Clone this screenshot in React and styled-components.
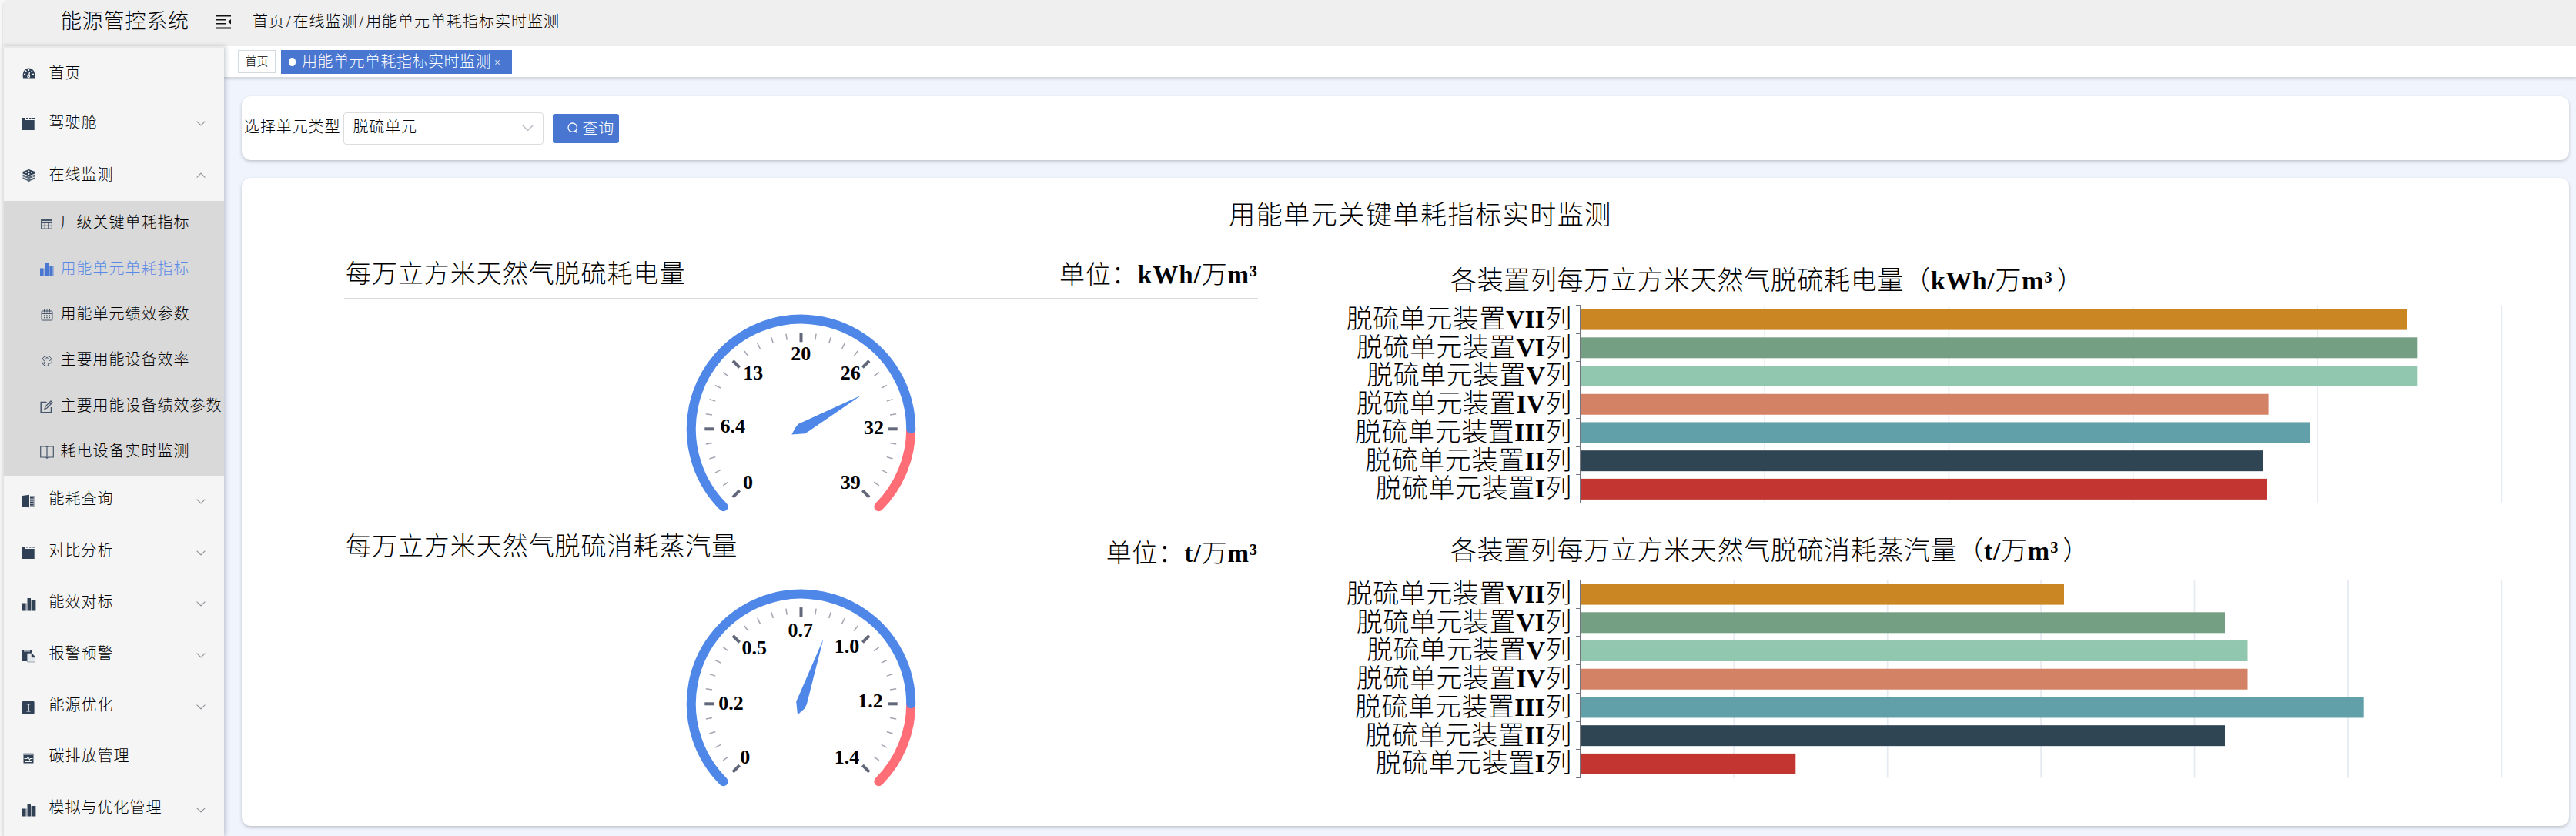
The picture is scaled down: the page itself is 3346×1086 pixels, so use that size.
import React from "react";
import styled, { createGlobalStyle } from "styled-components";

const serif = `"Liberation Serif", "Noto Sans CJK SC", serif`;
const navy = "#304156";
const blue = "#4876d0";

const GlobalStyle = createGlobalStyle`
  * { box-sizing: border-box; }
  body { margin: 0; background: #f7f7f7; }
`;

const Page = styled.div`
  width: 3346px;
  height: 1086px;
  padding-left: 3px;
  display: flex;
  flex-direction: column;
  overflow: hidden;
  font-family: ${serif};
  font-weight: 300;
  color: #000;
  white-space: nowrap;
  line-height: 1;
`;

const Header = styled.header`
  height: 60px;
  flex: none;
  display: flex;
  align-items: center;
  padding: 0 0 4px 75px;
  background: #efefef;
  border-left: 1px solid #e6e6e6;
  border-top-left-radius: 8px;
`;

const Brand = styled.div`
  width: 202px;
  font-size: 27px;
  letter-spacing: 0.8px;
`;

const Crumbs = styled.div`
  margin-left: 28px;
  padding-bottom: 1px;
  font-size: 20px;
  letter-spacing: 1px;
`;

const Slash = styled.span`
  margin: 0 2px;
`;

const Body = styled.div`
  flex: 1;
  display: flex;
  min-height: 0;
`;

const Sidebar = styled.nav`
  position: relative;
  width: 288px;
  flex: none;
  background: #f5f5f5;
  border-left: 2px solid #e4e4e4;
  border-top: 2px solid #e9e9e9;
  box-shadow: 2px 0 6px rgba(0, 21, 41, 0.22);
`;

const MenuRow = styled.div`
  height: ${(p) => p.$h || 66.8}px;
  display: flex;
  align-items: center;
  padding: 0 24px 0 24px;
`;

const SubMenu = styled.div`
  height: 357px;
  background: #d9d9d9;
`;

const SubRow = styled.div`
  height: 59.35px;
  display: flex;
  align-items: center;
  padding-left: 47px;
  color: ${(p) => (p.$active ? "#5b8ae6" : "#000")};
`;

const IconBox = styled.span`
  width: ${(p) => p.$w}px;
  height: 18px;
  flex: none;
  display: flex;
  color: ${(p) => p.$color || navy};
`;

const MenuText = styled.span`
  flex: 1;
  font-size: 20px;
  letter-spacing: 1px;
  padding-bottom: ${(p) => p.$lift || 0}px;
`;

const Main = styled.main`
  flex: 1;
  min-width: 0;
  display: flex;
  flex-direction: column;
  background: #f0f4fd;
`;

const TagBar = styled.div`
  height: 41px;
  flex: none;
  display: flex;
  align-items: center;
  gap: 7px;
  padding: 0 0 0 18px;
  background: #fff;
  border-bottom: 1px solid #d4d9e1;
  box-shadow: 0 2px 3px rgba(0, 0, 0, 0.12);
`;

const Tag = styled.div`
  width: 49px;
  height: 30px;
  display: flex;
  align-items: center;
  justify-content: center;
  border: 1px solid #d3dae0;
  font-size: 15px;
`;

const ActiveTag = styled.div`
  width: 300px;
  height: 31px;
  display: flex;
  align-items: center;
  padding: 0 0 0 10px;
  background: ${blue};
  color: #fff;
  font-size: 20px;
  letter-spacing: 0.5px;
`;

const Dot = styled.span`
  width: 9px;
  height: 11px;
  margin-right: 8px;
  border-radius: 5px;
  background: #fff;
`;

const Close = styled.span`
  margin: 3px 0 0 4px;
  font-size: 14px;
`;

const Card = styled.section`
  margin: ${(p) => p.$m};
  height: ${(p) => p.$h}px;
  flex: none;
  border-radius: 12px;
  background: #fff;
  box-shadow: 0 2px 4px rgba(0, 0, 0, 0.2);
`;

const FilterBar = styled.div`
  height: 100%;
  display: flex;
  align-items: center;
  padding-left: 3px;
  font-size: 20px;
  letter-spacing: 0.9px;
`;

const FieldText = styled.span`
  padding-bottom: 3px;
`;

const Select = styled.div`
  width: 260px;
  height: 42px;
  margin: 0 12px 0 4px;
  padding: 0 12px 0 11px;
  display: flex;
  align-items: center;
  justify-content: space-between;
  border: 1px solid #dcdcdc;
  border-radius: 4px;
`;

const Query = styled.div`
  width: 86px;
  height: 38px;
  display: flex;
  align-items: center;
  padding-left: 19px;
  gap: 5px;
  border-radius: 3px;
  background: ${blue};
  color: #fff;
`;

const PanelTitle = styled.h1`
  margin: 0;
  height: 96px;
  padding: 2px 0 0 39px;
  display: flex;
  align-items: center;
  justify-content: center;
  font-size: 34px;
  font-weight: 300;
  letter-spacing: 1.55px;
`;

const Board = styled.div`
  display: grid;
  grid-template-columns: 1187px 1530px;
  grid-template-rows: 357px 357px;
  column-gap: 106px;
  padding-left: 133px;
`;

const Cell = styled.div`
  display: flex;
  flex-direction: column;
  align-items: center;
`;

const CellHead = styled.div`
  width: 100%;
  height: 61px;
  flex: none;
  display: flex;
  justify-content: space-between;
  align-items: flex-start;
  padding-left: 2px;
  border-bottom: 1px solid #d9d9dc;
  font-size: 33px;
`;

const HeadText = styled.span`
  padding-top: ${(p) => p.$top}px;
  letter-spacing: 0.95px;
`;

const ChartTitle = styled.div`
  width: 100%;
  height: 61px;
  flex: none;
  padding: ${(p) => p.$top}px 0 0 144px;
  font-size: 34px;
  letter-spacing: 0.65px;
`;

const Bold = styled.b`
  font-weight: 700;
  letter-spacing: ${(p) => p.$ls || 0.6}px;
`;

const Paren = styled.span`
  margin-left: 5px;
`;

const ChartSvg = styled.svg`
  display: block;
  flex: none;
  font-family: ${serif};
`;

/* ---------- icons ---------- */

const Svg = ({ children, w = 17, h = 18 }) => (
  <svg width={w} height={h} viewBox={`0 0 ${w} ${h}`} fill="currentColor">{children}</svg>
);

const icons = {
  gauge: (
    <Svg>
      <path d="M1 15.5C-.5 8 3 2.5 8.5 2.5S17.500 8 16 15.500Z" />
      <g stroke="#f5f5f5" strokeWidth="1.3" fill="none">
        <path d="M8.500 3.500v2.500M4 5.500l1.300 1.500M13 5.500l-1.300 1.500M2 10.500h2.200M15 10.500h-2.200M9.500 7.500l-1 5" />
        <circle cx="8.200" cy="13.300" r="1.300" />
      </g>
    </Svg>
  ),
  board: (
    <Svg>
      <path d="M0 1h4v3h13v13H0z" />
      <path d="M5 1h2.500v1.500H5zM9 1h2.500v1.500H9zM13 1h4v1.500h-4z" />
      <path d="M15.500 4H17v13h-1.500z" fill="#a4adb8" />
    </Svg>
  ),
  layers: (
    <Svg>
      <path d="M8.500 1l8 3v2.600l-8 3-8-3V4z" />
      <path d="M.5 7.600l8 3 8-3v2.600l-8 3-8-3zM.5 11.200l8 3 8-3v2.200l-5.500 2.200-2.500 2-2.500-2L.5 13.400z" opacity=".8" />
      <g fill="#f5f5f5"><circle cx="5" cy="5" r="1" /><circle cx="12" cy="5" r="1" /><circle cx="8.500" cy="3.300" r=".9" /><circle cx="8.500" cy="7" r="1" /><circle cx="3.500" cy="10" r=".8" /><circle cx="13.500" cy="10" r=".8" /></g>
    </Svg>
  ),
  table: (
    <Svg>
      <g fill="none" stroke="currentColor" strokeWidth="1.100">
        <rect x="1.600" y="3.600" width="13.800" height="11.500" />
        <path d="M1.600 7.500h13.800M1.600 11.300h13.800M6.200 7.500v7.500M10.800 7.500v7.500" />
        <path d="M1.600 4.200h13.800" strokeWidth="1.800" />
      </g>
    </Svg>
  ),
  bars: (
    <Svg w={18}>
      <path d="M0 7.500h4.500V17.500H0zM6.500 1h4.500v16.500H6.500zM12.500 4h4v13.500h-4z" />
      <path d="M4.500 7.500h1.500v10H4.500zM11 4h1.500v13.500H11zM16.500 4H18v13.500h-1.500z" opacity=".4" />
    </Svg>
  ),
  calendar: (
    <Svg>
      <g fill="none" stroke="currentColor" strokeWidth="1">
        <rect x="2" y="4" width="14" height="12" rx="1" />
        <path d="M2 7.500h14M5.500 2v3.500M12.500 2v3.500M9 2v3.500" />
        <path d="M5 10h1.500M8.200 10h1.500M11.500 10H13M5 12.500h1.500M8.200 12.500h1.500M11.500 12.500H13" strokeWidth="1.600" />
      </g>
    </Svg>
  ),
  palette: (
    <Svg>
      <g fill="none" stroke="currentColor" strokeWidth="1">
        <path d="M9 2.500A6.500 6.500 0 1 0 10 15.400c1.200-.5 0-2 .6-2.900s3.500 0 4.300-1.300C16.500 7 13.500 2.500 9 2.500z" />
        <circle cx="9" cy="5.500" r="1.100" /><circle cx="12.500" cy="7.500" r="1" /><circle cx="5.500" cy="7.500" r="1.100" /><circle cx="5.700" cy="11.500" r="1.100" />
      </g>
    </Svg>
  ),
  edit: (
    <Svg>
      <g fill="none" stroke="currentColor">
        <path d="M8.500 3.500H1.200V16.800H14.500V10" strokeWidth="1.500" />
        <path d="M6 12.500l1-3.500 7-7 2 2-7 7zM12 4l2 2" strokeWidth="1.300" />
      </g>
    </Svg>
  ),
  book: (
    <Svg w={18}>
      <path d="M.7 2H7.500L9 3l1.500-1h6.800v14H10.500L9 17.200 7.500 16H.7zM9 3v14" fill="none" stroke="currentColor" strokeWidth="1.200" />
    </Svg>
  ),
  notebook: (
    <Svg>
      <path d="M0 2L9 .8v16.400L0 16z" />
      <path d="M10 2h5.500v14H10z" opacity=".45" />
      <path d="M10 4h4.500v1.500H10zM10 7h4.500v1.500H10zM10 10h4.500v1.500H10zM10 13h4.500v1.500H10z" />
      <path d="M15.500 2H17v14h-1.500z" opacity=".35" />
    </Svg>
  ),
  copy: (
    <Svg>
      <path d="M0 1h12v3l1 2v10H0z" />
      <path d="M2 2.300h8v1.200H2z" fill="#cfd4da" />
      <path d="M6.500 6H12v5h5v6H6.500z" fill="#e4e7eb" stroke="#9aa5b1" strokeWidth="1" />
      <path d="M12.500 5.500V10.500H17z" />
    </Svg>
  ),
  info: (
    <Svg>
      <rect y="1" width="15.500" height="16.500" rx="1" />
      <path d="M15.500 2H17v14h-1.500z" opacity=".35" />
      <path d="M5.500 4h5v1.300H8.800v8H10.500v1.300h-5V13.300H7.200v-8H5.500z" fill="#f5f5f5" />
    </Svg>
  ),
  monitor: (
    <Svg>
      <path d="M1.500 3h13v12.500h-13z" />
      <path d="M1.500 2.500h13V5h-13z" fill="#8d97a3" />
      <path d="M2.500 9.500H6L7.500 7.500 9.500 11l1-1.500h3M3 13.500h10" fill="none" stroke="#f5f5f5" strokeWidth="1.100" />
    </Svg>
  ),
};

const Chevron = ({ up, w = 12, color = "#8f959c" }) => (
  <svg width={w} height={w * 0.6} viewBox="0 0 20 12" fill="none" stroke={color} strokeWidth="2">
    <path d={up ? "M1 11l9-9 9 9" : "M1 1l9 9 9-9"} />
  </svg>
);

const FoldIcon = () => (
  <svg width="19" height="19" viewBox="0 0 19 19" fill="#111">
    <path d="M0 .5h19v2H0zM0 6h12.500v1.500H0zM0 11h12.500v1.500H0zM0 16.500h19v2H0zM19 6v6.500l-4-3.200z" />
  </svg>
);

const SearchIcon = () => (
  <svg width="14" height="15" viewBox="0 0 14 15" fill="none" stroke="#fff" strokeWidth="1.300">
    <circle cx="6.700" cy="6.700" r="5.700" />
    <path d="M10.500 10.800l2 3.200" />
  </svg>
);

/* ---------- data ---------- */

const topMenu = [
  { icon: "gauge", text: "首页", h: 66 },
  { icon: "board", text: "驾驶舱", arrow: "down", h: 66, lift: 5 },
  { icon: "layers", text: "在线监测", arrow: "up", h: 67, lift: 2 },
];

const subMenu = [
  ["table", "厂级关键单耗指标"],
  ["bars", "用能单元单耗指标"],
  ["calendar", "用能单元绩效参数"],
  ["palette", "主要用能设备效率"],
  ["edit", "主要用能设备绩效参数"],
  ["book", "耗电设备实时监测"],
];

const bottomMenu = [
  { icon: "notebook", text: "能耗查询", arrow: "down" },
  { icon: "board", text: "对比分析", arrow: "down" },
  { icon: "bars", text: "能效对标", arrow: "down" },
  { icon: "copy", text: "报警预警", arrow: "down" },
  { icon: "info", text: "能源优化", arrow: "down" },
  { icon: "monitor", text: "碳排放管理" },
  { icon: "bars", text: "模拟与优化管理", arrow: "down" },
];

const rowColors = ["#c98622", "#749f83", "#91c7ae", "#d48265", "#61a0a8", "#2f4554", "#c23531"];
const numerals = ["VII", "VI", "V", "IV", "III", "II", "I"];

const powerBars = [1074, 1087.3, 1087.3, 893.6, 947.3, 887, 891.2];
const steamBars = [628, 837, 866.5, 866.5, 1016.7, 837, 279.3];

const powerGauge = {
  labels: [["0", 111.5, 237.7], ["6.4", 91.7, 165.5], ["13", 118.3, 96], ["20", 180.3, 71.3], ["26", 244.7, 96], ["32", 275, 167], ["39", 244.7, 238.5]],
  needle: "258.700,125.500 177,162.700 173.500,167 168.300,176.500 185.500,175.300 190,172.500",
};
const steamGauge = {
  labels: [["0", 107.7, 238], ["0.2", 89.5, 167.700], ["0.5", 119.7, 96.500], ["0.7", 179.7, 73.200], ["1.0", 240, 94.500], ["1.2", 270.500, 165.500], ["1.4", 240, 238.500]],
  needle: "209.300,85.500 174.200,166.500 176,183.500 185,175.500 187.800,170",
};

const MenuItem = ({ item, lift }) => (
  <MenuRow $h={item.h}>
    <IconBox $w={34.5}>{icons[item.icon]}</IconBox>
    <MenuText $lift={item.lift ?? lift}>{item.text}</MenuText>
    {item.arrow && <Chevron up={item.arrow === "up"} />}
  </MenuRow>
);

const Gauge = ({ labels, needle }) => {
  const cx = 180.5, cy = 169.3, r = 142.7;
  const pt = (deg, rad) => {
    const a = (deg * Math.PI) / 180;
    return [cx + rad * Math.cos(a), cy - rad * Math.sin(a)];
  };
  const [sx, sy] = pt(225, r);
  const [mx, my] = pt(0, r);
  const [ex, ey] = pt(-45, r);
  const ticks = Array.from({ length: 31 }, (_, i) => {
    const major = i % 5 === 0;
    const a = 225 - i * 9;
    const [x1, y1] = pt(a, 125.2);
    const [x2, y2] = pt(a, major ? 113 : 117);
    return (
      <line key={i} x1={x1} y1={y1} x2={x2} y2={y2}
        stroke={major ? "#63677a" : "#a3a5b0"} strokeWidth={major ? 4 : 1.5} />
    );
  });
  return (
    <ChartSvg width="361" height="296" viewBox="0 0 361 296">
      <g fill="none" strokeWidth="12" strokeLinecap="round">
        <path d={`M${mx} ${my}A${r} ${r} 0 0 1 ${ex} ${ey}`} stroke="#ff6e76" />
        <path d={`M${sx} ${sy}A${r} ${r} 0 1 1 ${mx} ${my}`} stroke="#4f87e9" />
      </g>
      {ticks}
      {labels.map(([t, x, y]) => (
        <text key={t} x={x} y={y + 8.8} fontSize="26" fontWeight="700" textAnchor="middle">{t}</text>
      ))}
      <polygon points={needle} fill="#4f87e9" />
    </ChartSvg>
  );
};

const BarChart = ({ bars, intervals }) => {
  const x0 = 313, top = 8.5, h = 257, pitch = h / 7, width = 1196.5;
  return (
    <ChartSvg width="1530" height="296" viewBox="0 0 1530 296">
      {Array.from({ length: intervals }, (_, i) => (
        <rect key={i} x={x0 - 1 + ((i + 1) * width) / intervals} y={top} width="1.700" height={h} fill="#e6eaf1" />
      ))}
      {bars.map((w, i) => {
        const y = top + i * pitch;
        return (
          <g key={i}>
            <rect x={x0} y={y + 5.1} width={w} height="27" fill={rowColors[i]} />
            <text x={x0 - 11.5} y={y + 29.5} fontSize="34" fontWeight="300" textAnchor="end">
              <tspan letterSpacing="0.550">脱硫单元装置</tspan>
              <tspan fontWeight="700">{numerals[i]}</tspan>
              <tspan dx="0.500">列</tspan>
            </text>
          </g>
        );
      })}
      <g fill="#73767f">
        <rect x={x0 - 1} y={top - 0.500} width="2" height={h + 1} />
        {Array.from({ length: 8 }, (_, i) => (
          <rect key={i} x={x0 - 6} y={Math.round(top + i * pitch - 0.500)} width="6" height="1" />
        ))}
      </g>
    </ChartSvg>
  );
};

export default function App() {
  return (
    <Page>
      <GlobalStyle />
      <Header>
        <Brand>能源管控系统</Brand>
        <FoldIcon />
        <Crumbs>首页<Slash>/</Slash>在线监测<Slash>/</Slash>用能单元单耗指标实时监测</Crumbs>
      </Header>
      <Body>
        <Sidebar>
          {topMenu.map((m) => <MenuItem key={m.text} item={m} lift={0} />)}
          <SubMenu>
            {subMenu.map(([icon, text], i) => (
              <SubRow key={text} $active={i === 1}>
                <IconBox $w={26.5} $color={i === 1 ? blue : "#46566a"}>{icons[icon]}</IconBox>
                <MenuText $lift={3}>{text}</MenuText>
              </SubRow>
            ))}
          </SubMenu>
          {bottomMenu.map((m) => <MenuItem key={m.text} item={m} lift={6} />)}
        </Sidebar>
        <Main>
          <TagBar>
            <Tag>首页</Tag>
            <ActiveTag><Dot />用能单元单耗指标实时监测<Close>×</Close></ActiveTag>
          </TagBar>
          <Card $m="24px 9px 0 23px" $h={83}>
            <FilterBar>
              <FieldText>选择单元类型</FieldText>
              <Select><FieldText>脱硫单元</FieldText><Chevron w={15} color="#b9bdc6" /></Select>
              <Query><SearchIcon />查询</Query>
            </FilterBar>
          </Card>
          <Card $m="23px 9px 0 23px" $h={842}>
            <PanelTitle>用能单元关键单耗指标实时监测</PanelTitle>
            <Board>
              <Cell>
                <CellHead>
                  <HeadText $top={13}>每万立方米天然气脱硫耗电量</HeadText>
                  <HeadText $top={14}>单位：<Bold $ls={1}>kWh/</Bold>万<Bold $ls={1}>m³</Bold></HeadText>
                </CellHead>
                <Gauge {...powerGauge} />
              </Cell>
              <Cell>
                <ChartTitle $top={21}>各装置列每万立方米天然气脱硫耗电量（<Bold>kWh/</Bold>万<Bold $ls={1.2}>m³</Bold><Paren>）</Paren></ChartTitle>
                <BarChart bars={powerBars} intervals={5} />
              </Cell>
              <Cell>
                <CellHead>
                  <HeadText $top={10}>每万立方米天然气脱硫消耗蒸汽量</HeadText>
                  <HeadText $top={19}>单位：<Bold $ls={1}>t/</Bold>万<Bold $ls={1}>m³</Bold></HeadText>
                </CellHead>
                <Gauge {...steamGauge} />
              </Cell>
              <Cell>
                <ChartTitle $top={15}>各装置列每万立方米天然气脱硫消耗蒸汽量（<Bold>t/</Bold>万<Bold $ls={1.2}>m³</Bold><Paren>）</Paren></ChartTitle>
                <BarChart bars={steamBars} intervals={6} />
              </Cell>
            </Board>
          </Card>
        </Main>
      </Body>
    </Page>
  );
}
